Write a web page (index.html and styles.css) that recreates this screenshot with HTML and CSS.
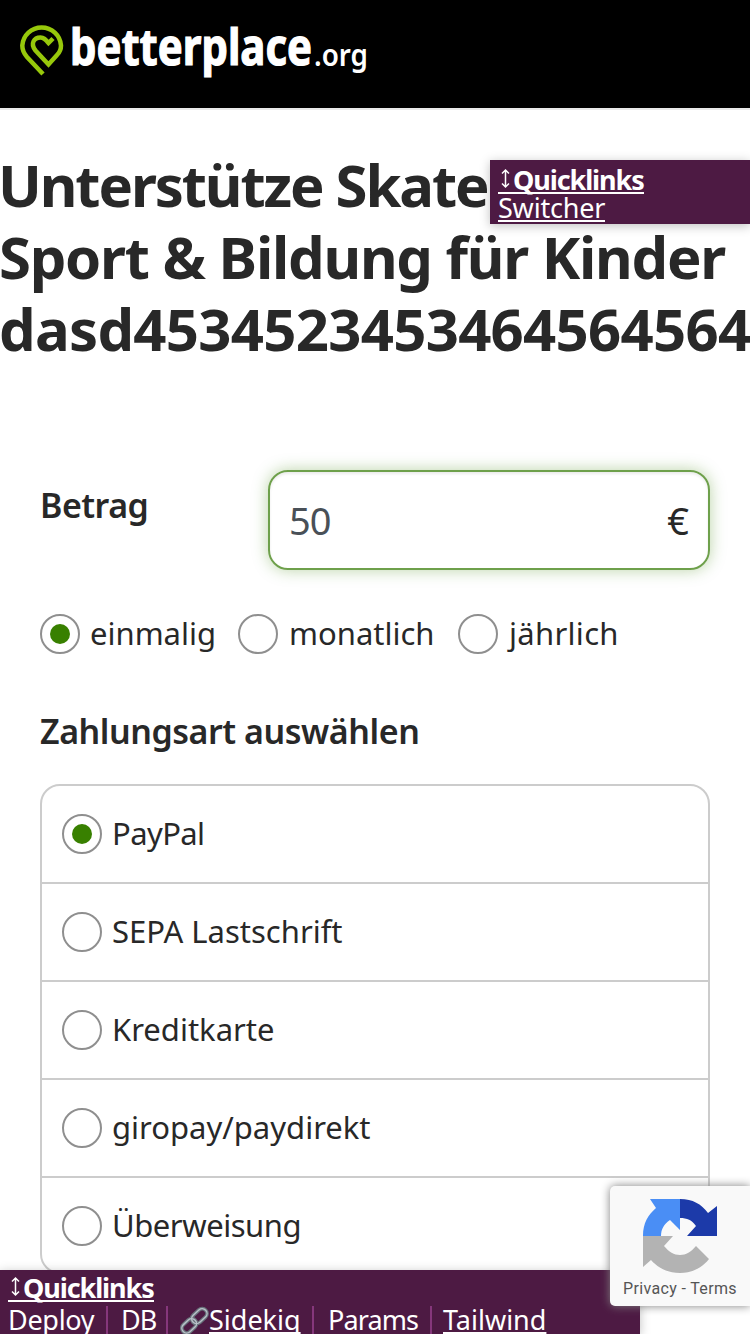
FILE: index.html
```html
<!DOCTYPE html>
<html lang="de">
<head>
<meta charset="utf-8">
<meta name="viewport" content="width=device-width">
<title>betterplace.org</title>
<link rel="stylesheet" href="styles.css">
</head>
<body>
<header class="header">
  <svg class="logo" width="350" height="60" viewBox="0 0 350 60" role="img" aria-label="betterplace.org">
    <path class="logo-pin" d="M23 54 7 37C3.500 33 2.300 29 2.300 25.500A19.400 19.400 0 0 1 41 25.500C41 29 40 32 37 35L28.500 44.500 15.500 30.500C10 23.500 14 17.500 20.500 17.500C24 17.500 25.500 19.500 28.500 23L33 18.500"/>
    <text class="logo-name" x="50" y="45" textLength="242" lengthAdjust="spacingAndGlyphs">betterplace</text>
    <text class="logo-tld" x="294" y="46" textLength="54" lengthAdjust="spacingAndGlyphs">.org</text>
  </svg>
</header>
<main>
  <h1 class="title"><span class="title-1">Unterstütze Skatei</span><br><span class="title-2">Sport &amp; Bildung für Kinder</span><br><span class="title-3">dasd4534523453464564564</span></h1>
  <form class="form">
    <div class="amount">
      <label class="label label-amount" for="amount">Betrag</label>
      <div class="field"><input class="input" id="amount" value="50"><span>€</span></div>
    </div>
    <div class="intervals">
      <label class="option option-once"><i class="radio checked"></i><span>einmalig</span></label>
      <label class="option option-month"><i class="radio"></i><span>monatlich</span></label>
      <label class="option option-year"><i class="radio"></i><span>jährlich</span></label>
    </div>
    <h2 class="label label-method">Zahlungsart auswählen</h2>
    <div class="methods">
      <label class="option method"><i class="radio checked"></i><span class="t-paypal">PayPal</span></label>
      <label class="option method"><i class="radio"></i><span>SEPA Lastschrift</span></label>
      <label class="option method"><i class="radio"></i><span>Kreditkarte</span></label>
      <label class="option method"><i class="radio"></i><span>giropay/paydirekt</span></label>
      <label class="option method"><i class="radio"></i><span class="t-bank">Überweisung</span></label>
    </div>
  </form>
</main>
<aside class="quick quick-top">
  <a class="quick-title"><svg class="arrow" viewBox="0 0 14 22"><path d="M7 2V19M3.500 5.500 7 2 10.500 5.500M3.500 15.500 7 19 10.500 15.500"/></svg><b>Quicklinks</b></a>
  <a class="switcher">Switcher</a>
</aside>
<aside class="quick quick-bottom">
  <a class="quick-title"><svg class="arrow" viewBox="0 0 14 22"><path d="M7 2V19M3.500 5.500 7 2 10.500 5.500M3.500 15.500 7 19 10.500 15.500"/></svg><b>Quicklinks</b></a>
  <nav class="links">
    <a class="l-deploy">Deploy</a><a class="l-db">DB</a><a class="l-sidekiq"><svg class="chain" viewBox="0 0 30 30"><g class="chain-dark"><rect x="1" y="15" width="17" height="10" rx="5" transform="rotate(-43 9.500 20)"/><rect x="11" y="5" width="18" height="10" rx="5" transform="rotate(-43 20 10)"/></g><g class="chain-light"><rect x="1" y="15" width="17" height="10" rx="5" transform="rotate(-43 9.500 20)"/><rect x="11" y="5" width="18" height="10" rx="5" transform="rotate(-43 20 10)"/></g></svg><span class="under">Sidekiq</span></a><a class="l-params">Params</a><a class="l-tail"><span class="under">Tailwind</span></a>
  </nav>
</aside>
<aside class="captcha">
  <svg width="76" height="76" viewBox="0 0 76 76">
    <path fill="#4a8ef5" d="M1 38C1 25 6 17 14 10L8 1H38V32L28 22C22 26 19 31 19 38Z"/>
    <path fill="#1c3aa9" d="M38 1C51 1 59 6 66 15L75 8V38H45L54 28C50 22 45 20 38 20Z"/>
    <path fill="#b3b3b3" d="M1 38H31L22 48C27 54 32 57 38 57C44 57 49 54 54 48L67 61C60 70 50 75 38 75C26 75 16 70 9 62L1 69Z"/>
  </svg>
  <div class="terms">Privacy - Terms</div>
</aside>
</body>
</html>
```
FILE: styles.css
```css
* { box-sizing: border-box; }
body { margin: 0; width: 750px; height: 1334px; overflow: hidden; position: relative; background: #fff; color: #282828; font-family: "Noto Sans", sans-serif; }
.header { height: 110px; background: #000; border-bottom: 2px solid #eaeaea; padding: 20px; }
.logo { display: block; overflow: visible; }
.logo-pin { fill: none; stroke: #97c80b; stroke-width: 4.500; }
.logo-name { fill: #fff; stroke: #fff; stroke-width: 1.200; font: 700 50px "Noto Sans", sans-serif; }
.logo-tld { fill: #fff; font: 600 30px "Noto Sans", sans-serif; }
.title { margin: 39px 0 0; height: 217px; font-size: 58px; line-height: 72px; font-weight: 700; white-space: nowrap; }
.title-1 { letter-spacing: -2.100px; margin-left: -2px; }
.title-2 { letter-spacing: -1.250px; margin-left: -1px; }
.title-3 { letter-spacing: -.700px; margin-left: -1px; }
.form { padding: 104px 40px 0; }
.amount { display: flex; justify-content: space-between; height: 100px; }
.label { margin: 0; font-size: 34px; line-height: 48px; font-weight: 600; white-space: nowrap; }
.label-amount { padding-top: 11px; letter-spacing: -.5px; }
.field { width: 442px; height: 100px; padding: 0 19px 0 19px; display: flex; align-items: center; border: 2px solid #6ea04b; border-radius: 20px; box-shadow: 0 0 16px rgba(56,128,0,.35), inset 0 2px 3px rgba(0,0,0,.08); font-size: 38px; }
.input { flex: 1; min-width: 0; border: 0; padding: 0; background: none; font: inherit; letter-spacing: -1px; color: #495057; outline: 0; }
.intervals { display: flex; margin-top: 44px; height: 40px; }
.option { display: flex; align-items: center; gap: 10px; font-size: 31px; line-height: 40px; white-space: nowrap; }
.option span { padding-bottom: 3px; }
.option-once { width: 198px; }
.option-month { width: 220px; gap: 11px; }
.option-year { gap: 11px; letter-spacing: .3px; }
.radio { flex: none; width: 40px; height: 40px; border: 2px solid #8f8f8f; border-radius: 50%; display: grid; place-items: center; }
.checked::after { content: ""; width: 20px; height: 20px; border-radius: 50%; background: #388000; }
.label-method { margin-top: 53px; letter-spacing: -.450px; }
.methods { margin-top: 29px; border: 2px solid #ccc; border-radius: 20px; height: 490px; overflow: hidden; }
.method { height: 98px; padding: 0 20px; border-bottom: 2px solid #ccc; }
.method:last-child { height: 96px; border: 0; }
.t-paypal { letter-spacing: -.6px; }
.t-bank { letter-spacing: -.450px; }
.quick { position: absolute; background: #4d1a43; color: #fff; font-size: 27px; line-height: 28px; box-shadow: 0 2px 10px rgba(0,0,0,.25); white-space: nowrap; overflow: hidden; }
.quick-top { left: 490px; top: 160px; width: 260px; height: 64px; padding: 6px 8px; }
.quick-bottom { left: 0; top: 1270px; width: 640px; height: 64px; padding: 4px 8px; }
.quick-title { display: flex; align-items: center; width: 146px; height: 28px; border-bottom: 2px solid #fff; }
.quick-title b { letter-spacing: -1.100px; padding-top: 2px; }
.arrow { width: 15px; height: 22px; fill: none; stroke: #fff; stroke-width: 1.500; flex: none; }
.switcher { display: block; width: 107px; height: 28px; border-bottom: 2px solid #fff; line-height: 28px; letter-spacing: -.2px; }
.links { display: flex; height: 40px; margin-top: 4px; line-height: 28px; }
.links a { flex: none; display: flex; }
.links a + a { border-left: 2px solid #85377b; }
.under { text-decoration: underline; text-decoration-thickness: 2px; text-underline-offset: 2px; text-decoration-skip-ink: none; }
.l-deploy { width: 98px; letter-spacing: -.3px; }
.l-db { width: 60px; padding-left: 13px; letter-spacing: -1px; }
.l-sidekiq { width: 146px; padding-left: 12px; }
.l-params { width: 118px; padding-left: 14px; letter-spacing: -.9px; }
.l-tail { padding-left: 11px; }
.chain { width: 29px; height: 30px; fill: none; }
.chain-dark { stroke: #68717a; stroke-width: 4; }
.chain-light { stroke: #b8c1c8; stroke-width: 1.500; }
.captcha { position: absolute; left: 610px; top: 1186px; width: 140px; height: 120px; padding: 12px 0 0 32px; background: #f9f9f9; border-radius: 5px 0 0 5px; box-shadow: 0 0 10px gray; }
.captcha svg { display: block; }
.terms { margin: 5px 0 0 -19px; font: 16px/20px Roboto, sans-serif; letter-spacing: .35px; color: #555; }
```
